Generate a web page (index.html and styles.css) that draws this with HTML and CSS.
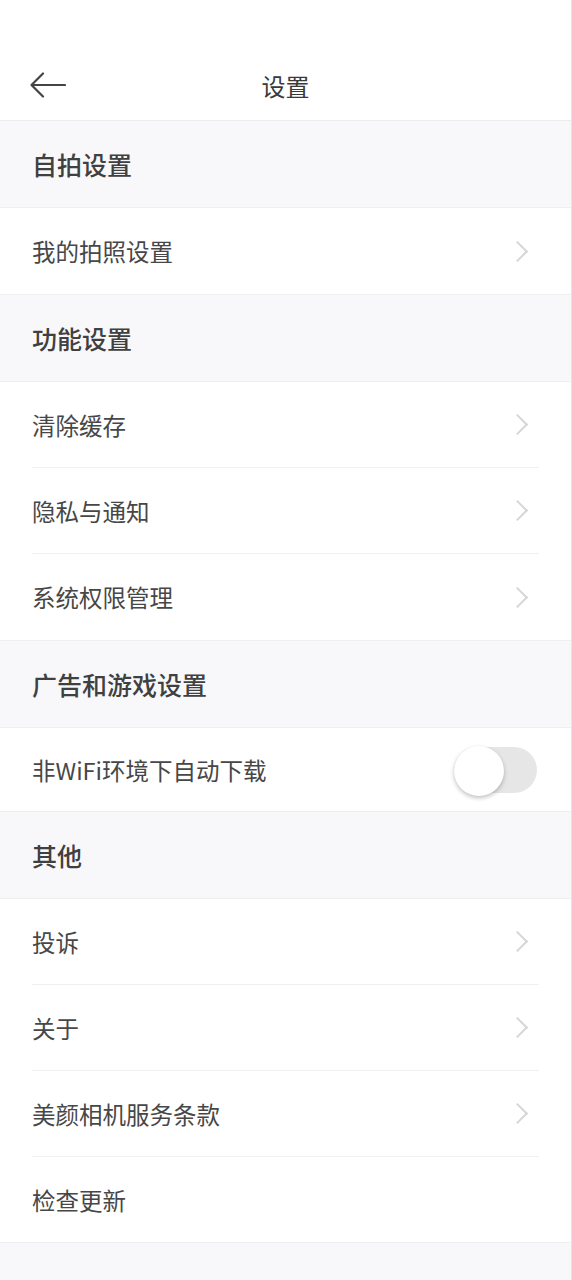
FILE: index.html
```html
<!DOCTYPE html>
<html lang="zh-CN">
<head>
<meta charset="utf-8">
<title>设置</title>
<link rel="stylesheet" href="styles.css">
</head>
<body>
<div class="page">
  <div class="status"></div>
  <header class="nav">
    <span class="back">
      <svg width="36" height="26" viewBox="0 0 36 26"><path d="M13 1.5 L1.5 13 L13 24.5 M1.5 13 H35" fill="none" stroke="#444" stroke-width="2.2" stroke-linecap="round" stroke-linejoin="round"/></svg>
    </span>
    <h1 class="title">设置</h1>
  </header>

  <div class="section">自拍设置</div>
  <div class="group">
    <div class="row"><span>我的拍照设置</span><i class="chev"></i></div>
  </div>

  <div class="section">功能设置</div>
  <div class="group">
    <div class="row"><span>清除缓存</span><i class="chev"></i></div>
    <div class="row"><span>隐私与通知</span><i class="chev"></i></div>
    <div class="row"><span>系统权限管理</span><i class="chev"></i></div>
  </div>

  <div class="section">广告和游戏设置</div>
  <div class="group">
    <div class="row row-toggle"><span>非WiFi环境下自动下载</span><span class="toggle"><span class="knob"></span></span></div>
  </div>

  <div class="section">其他</div>
  <div class="group">
    <div class="row"><span>投诉</span><i class="chev"></i></div>
    <div class="row"><span>关于</span><i class="chev"></i></div>
    <div class="row"><span>美颜相机服务条款</span><i class="chev"></i></div>
    <div class="row row-last"><span>检查更新</span></div>
  </div>
</div>
</body>
</html>
```

FILE: styles.css
```css
html, body {
  margin: 0;
  padding: 0;
  background: #f8f8fb;
}
body {
  font-family: "Noto Sans CJK SC", "Noto Sans", sans-serif;
  color: #3d3d3d;
}
.page {
  width: 572px;
  min-height: 1280px;
  background: #f8f8fb;
  border-right: 1px solid #e4e4e4;
  box-sizing: border-box;
}
.status {
  height: 50px;
  background: #fff;
}
.nav {
  height: 70px;
  background: #fff;
  border-bottom: 1px solid #ececef;
  display: flex;
  align-items: center;
  justify-content: center;
  position: relative;
}
.back {
  position: absolute;
  left: 30px;
  top: 22px;
  display: flex;
}
.title {
  margin: 0;
  font-size: 24px;
  font-weight: 400;
  color: #3a3a3a;
  line-height: 1;
  padding-top: 2px;
}
.section {
  height: 87px;
  box-sizing: border-box;
  padding-left: 32px;
  display: flex;
  align-items: center;
  font-size: 25px;
  font-weight: 500;
  color: #404040;
  background: #f8f8fb;
  border-bottom: 1px solid #efeff2;
}
.group {
  background: #fff;
  border-bottom: 1px solid #efeff2;
}
.row {
  height: 86px;
  box-sizing: border-box;
  margin: 0 32px;
  display: flex;
  align-items: center;
  justify-content: space-between;
  font-size: 23.5px;
  color: #474747;
  border-bottom: 1px solid #f0f0f2;
}
.row:last-child {
  border-bottom: none;
}
.row-toggle {
  height: 83px;
  margin-right: 34px;
}
.row-last {
  height: 85px;
}
.chev {
  display: block;
  width: 13px;
  height: 13px;
  border-top: 2.5px solid #d6d6d6;
  border-right: 2.5px solid #d6d6d6;
  transform: rotate(45deg);
  margin-right: 14px;
}
.toggle {
  width: 83px;
  height: 46px;
  border-radius: 23px;
  background: #e6e6e6;
  position: relative;
  display: block;
}
.knob {
  position: absolute;
  left: 0;
  top: -1px;
  width: 50px;
  height: 50px;
  border-radius: 50%;
  background: #fff;
  box-shadow: 0 2px 4px rgba(0,0,0,0.25);
}
```
